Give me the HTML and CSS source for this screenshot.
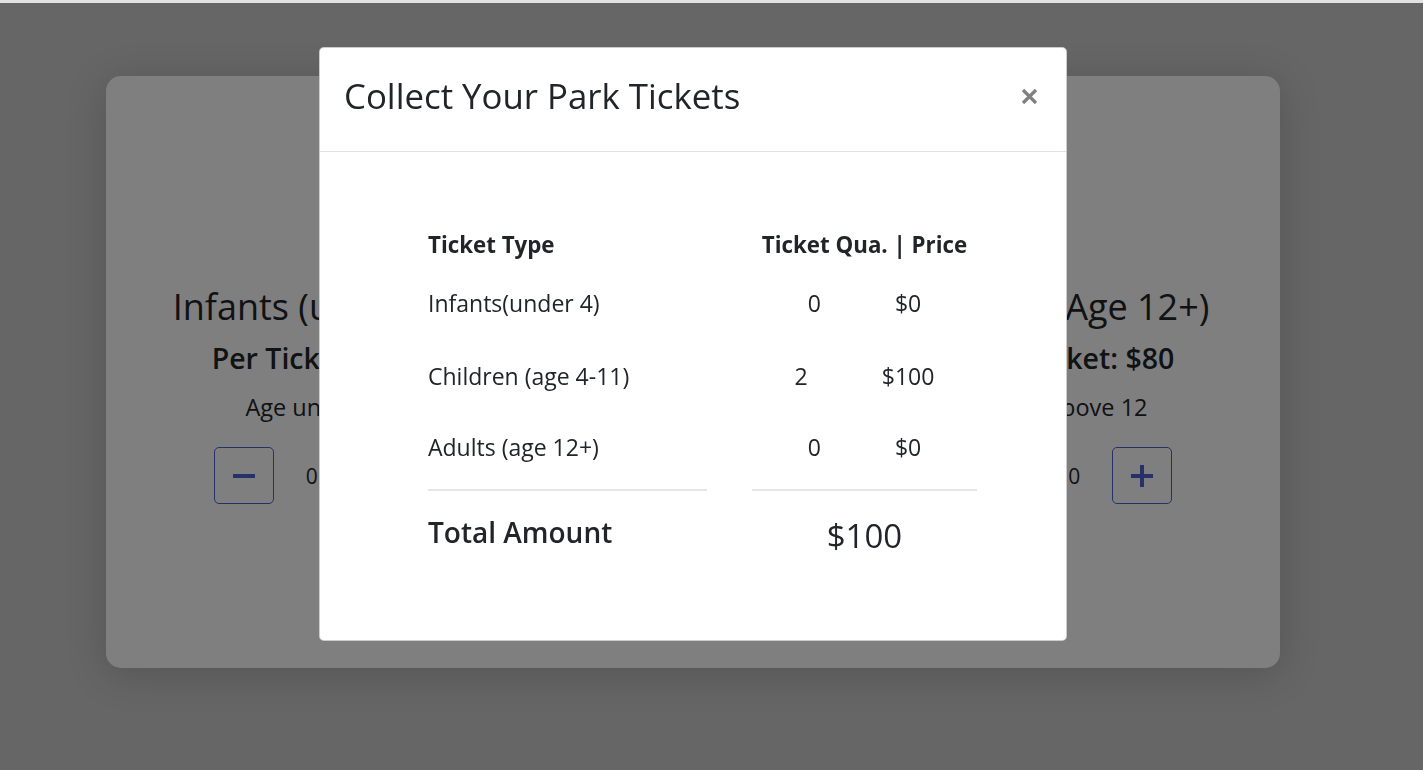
FILE: index.html
```html
<!DOCTYPE html>
<html lang="en">
<head>
<meta charset="utf-8">
<title>Park Tickets</title>
<link rel="stylesheet" href="styles.css">
</head>
<body>
<div class="topbar"></div>
<main class="page">
  <section class="card">
    <div class="ticket-col">
      <h2 class="ticket-title">Infants (under 4)</h2>
      <h4 class="ticket-price">Per Ticket: $20</h4>
      <p class="ticket-age">Age under 4</p>
      <div class="counter">
        <button class="step-btn" aria-label="decrease"><svg width="22" height="4" viewBox="0 0 22 4"><rect x="0" y="0" width="22" height="4" fill="currentColor"/></svg></button>
        <span class="count">0</span>
        <button class="step-btn" aria-label="increase"><svg width="22" height="22" viewBox="0 0 22 22"><rect x="0" y="9" width="22" height="4" fill="currentColor"/><rect x="9" y="0" width="4" height="22" fill="currentColor"/></svg></button>
      </div>
    </div>
    <div class="ticket-col">
      <h2 class="ticket-title">Children (Age 4-11)</h2>
      <h4 class="ticket-price">Per Ticket: $50</h4>
      <p class="ticket-age">Age 4 to 11</p>
      <div class="counter">
        <button class="step-btn" aria-label="decrease"><svg width="22" height="4" viewBox="0 0 22 4"><rect x="0" y="0" width="22" height="4" fill="currentColor"/></svg></button>
        <span class="count">2</span>
        <button class="step-btn" aria-label="increase"><svg width="22" height="22" viewBox="0 0 22 22"><rect x="0" y="9" width="22" height="4" fill="currentColor"/><rect x="9" y="0" width="4" height="22" fill="currentColor"/></svg></button>
      </div>
    </div>
    <div class="ticket-col">
      <h2 class="ticket-title">Adults (Age 12+)</h2>
      <h4 class="ticket-price">Per Ticket: $80</h4>
      <p class="ticket-age">Age above 12</p>
      <div class="counter">
        <button class="step-btn" aria-label="decrease"><svg width="22" height="4" viewBox="0 0 22 4"><rect x="0" y="0" width="22" height="4" fill="currentColor"/></svg></button>
        <span class="count">0</span>
        <button class="step-btn" aria-label="increase"><svg width="22" height="22" viewBox="0 0 22 22"><rect x="0" y="9" width="22" height="4" fill="currentColor"/><rect x="9" y="0" width="4" height="22" fill="currentColor"/></svg></button>
      </div>
    </div>
  </section>
</main>
<div class="backdrop"></div>
<div class="modal" role="dialog">
  <div class="modal-header">
    <h5 class="modal-title">Collect Your Park Tickets</h5>
    <button class="close-btn" aria-label="Close"><svg width="17" height="17" viewBox="0 0 17 17"><path d="M2 2 L15 15 M15 2 L2 15" stroke="currentColor" stroke-width="3.2" stroke-linecap="butt"/></svg></button>
  </div>
  <div class="modal-body">
    <div class="summary">
      <div class="row row-head">
        <div class="cell-type">Ticket Type</div>
        <div class="cell-qp">Ticket Qua. | Price</div>
      </div>
      <div class="row row-1">
        <div class="cell-type">Infants(under 4)</div>
        <div class="cell-qp"><span class="pair"><span>0</span><span>$0</span></span></div>
      </div>
      <div class="row row-2">
        <div class="cell-type">Children (age 4-11)</div>
        <div class="cell-qp"><span class="pair"><span>2</span><span>$100</span></span></div>
      </div>
      <div class="row row-3">
        <div class="cell-type">Adults (age 12+)</div>
        <div class="cell-qp"><span class="pair"><span>0</span><span>$0</span></span></div>
      </div>
      <div class="row row-rule">
        <hr class="rule">
        <hr class="rule">
      </div>
      <div class="row row-total">
        <div class="cell-type total-label">Total Amount</div>
        <div class="cell-qp total-value">$100</div>
      </div>
    </div>
  </div>
</div>
</body>
</html>
```
FILE: styles.css
```css
* { box-sizing: border-box; }
html, body { margin: 0; padding: 0; }
body {
  font-family: "Open Sans", "Noto Sans", sans-serif;
  color: #212529;
  background: #cccccc;
  height: 770px;
  overflow: hidden;
}
.topbar {
  position: fixed;
  top: 0; left: 0; right: 0;
  height: 3px;
  background: #e2e2e2;
  z-index: 30;
}
.page {
  padding-top: 76px;
  padding-left: 106px;
}
.card {
  width: 1174px;
  height: 592px;
  background: #fff;
  border-radius: 15px;
  box-shadow: 0 6px 40px rgba(0,0,0,0.18);
  padding: 210px 15px 0;
  display: grid;
  grid-template-columns: repeat(3, 1fr);
  align-items: start;
}
.ticket-col {
  display: flex;
  flex-direction: column;
  align-items: center;
  text-align: center;
}
.ticket-title {
  margin: 0;
  font-size: 36px;
  line-height: 41px;
  font-weight: 500;
  white-space: nowrap;
}
.ticket-price {
  margin: 16px 0 0;
  font-size: 28.5px;
  line-height: 31px;
  font-weight: 600;
  white-space: nowrap;
}
.ticket-age {
  margin: 18px 0 0;
  font-size: 23.5px;
  line-height: 30px;
}
.counter {
  margin-top: 25px;
  display: flex;
  align-items: center;
  gap: 32px;
}
.step-btn {
  width: 60px;
  height: 57px;
  border: 1px solid #4c63d2;
  border-radius: 5px;
  background: transparent;
  color: #4c63d2;
  display: flex;
  align-items: center;
  justify-content: center;
  padding: 0;
}
.count {
  font-size: 21px;
  width: 12px;
  text-align: center;
}
.backdrop {
  position: fixed;
  inset: 0;
  background: rgba(0,0,0,0.5);
  z-index: 10;
}
.modal {
  position: fixed;
  left: 319px;
  top: 47px;
  width: 748px;
  height: 594px;
  background: #fff;
  border: 1px solid rgba(0,0,0,0.2);
  border-radius: 5px;
  z-index: 20;
  display: flex;
  flex-direction: column;
}
.modal-header {
  height: 104px;
  border-bottom: 1px solid #dee2e6;
  display: flex;
  align-items: center;
  justify-content: space-between;
  padding: 0 28px 8px 24px;
}
.modal-title {
  margin: 0;
  font-size: 34.8px;
  font-weight: 500;
  line-height: 1.2;
  white-space: nowrap;
}
.close-btn {
  border: 0;
  background: transparent;
  padding: 0;
  color: #808080;
  display: flex;
  margin-top: 2px;
}
.modal-body {
  padding: 72px 0 0 108px;
}
.summary {
  width: 549px;
}
.row {
  display: grid;
  grid-template-columns: 279px 225px;
  column-gap: 45px;
  align-items: center;
  white-space: nowrap;
}
.row-head { height: 40px; font-weight: 700; font-size: 22.3px; }
.row-1 { height: 78px; }
.row-2 { height: 68px; }
.row-3 { height: 74px; }
.row-1, .row-2, .row-3 { font-size: 23px; }
.cell-qp { text-align: center; }
.pair {
  display: inline-flex;
  gap: 74px;
}
.row-rule { margin-top: 5px; }
.rule {
  margin: 0;
  border: 0;
  border-top: 2px solid #e6e6e6;
}
.row-total { height: 88px; }
.total-label {
  font-size: 28px;
  font-weight: 600;
  margin-top: -6px;
}
.total-value {
  font-size: 33px;
  font-weight: 500;
}
```
